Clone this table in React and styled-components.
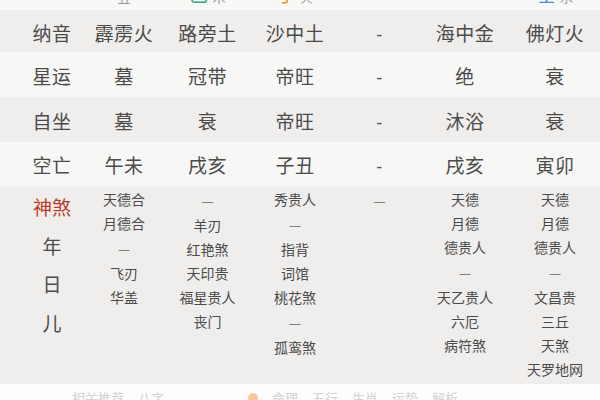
import React from 'react';
import styled, { createGlobalStyle } from 'styled-components';

const GlobalStyle = createGlobalStyle`
  html, body {
    margin: 0;
    padding: 0;
    background: #fdfdfd;
    overflow: hidden;
  }
  body {
    width: 600px;
    height: 400px;
    font-family: "Noto Sans CJK SC", "Noto Sans", sans-serif;
    color: #4b4b4b;
  }
`;

const COLS = '19px 66px 78px 89px 86px 83px 88px 92px';

const Page = styled.div`
  width: 600px;
  height: 400px;
  display: flex;
  flex-direction: column;
  overflow: hidden;
`;

const TopStrip = styled.div`
  flex-shrink: 0;
  height: 10px;
  background: #f8f8f7;
  display: grid;
  grid-template-columns: ${COLS};
`;

const TopCell = styled.div`
  grid-column: ${p => p.$col};
  height: 10px;
  overflow: hidden;
  text-align: center;
  white-space: nowrap;
`;

const TopText = styled.div`
  font-size: 19px;
  line-height: 19px;
  margin-top: -16px;
`;

const Elem = styled.span`
  color: ${p => p.$color};
  margin-right: 4px;
`;

const Tag = styled.span`
  color: #9a9a9a;
  font-size: 13px;
`;

const Row = styled.div`
  flex-shrink: 0;
  display: grid;
  grid-template-columns: ${COLS};
  height: ${p => p.$h}px;
  align-items: center;
  background: ${p => (p.$tone === 'dark' ? '#efeeec' : '#f7f7f6')};
  font-size: 19px;
  padding-top: ${p => p.$pad}px;
  box-sizing: border-box;
`;

const Cell = styled.div`
  grid-column: ${p => p.$col};
  text-align: center;
  white-space: nowrap;
  letter-spacing: 0.5px;
`;

const Hyphen = styled.span`
  font-family: "Liberation Sans", sans-serif;
  font-size: 18px;
  color: #555;
`;

const ShenshaRow = styled.div`
  flex-shrink: 0;
  display: grid;
  grid-template-columns: ${COLS};
  height: 197px;
  background: #efeeec;
  align-items: start;
`;

const LabelStack = styled.div`
  grid-column: 2;
  display: flex;
  flex-direction: column;
  align-items: center;
  padding-top: 1px;
  font-size: 19px;
  line-height: 38.5px;
`;

const Red = styled.span`
  color: #c0392b;
`;

const List = styled.div`
  grid-column: ${p => p.$col};
  display: flex;
  flex-direction: column;
  align-items: center;
  padding-top: 0;
  font-size: 14px;
  line-height: 24px;
  white-space: nowrap;
`;

const Dash = styled.span`
  font-family: "Liberation Sans", sans-serif;
  font-size: 11px;
  color: #666;
`;

const BottomStrip = styled.div`
  flex: 1;
  min-height: 0;
  overflow: hidden;
  background: #fdfdfd;
  display: flex;
  align-items: flex-start;
  padding-top: 4px;
  padding-left: 72px;
  gap: 14px;
  font-size: 13px;
  color: #d2d2d2;
  white-space: nowrap;
`;

const Dot = styled.span`
  display: inline-block;
  flex-shrink: 0;
  width: 10px;
  height: 10px;
  margin-top: 5px;
  border-radius: 50%;
  background: #f6c89a;
  margin-left: 70px;
`;

const main = [
  { label: '纳音', vals: ['霹雳火', '路旁土', '沙中土', '-', '海中金', '佛灯火'], h: 42, pad: 2, tone: 'dark' },
  { label: '星运', vals: ['墓', '冠带', '帝旺', '-', '绝', '衰'], h: 45, pad: 1, tone: 'light' },
  { label: '自坐', vals: ['墓', '衰', '帝旺', '-', '沐浴', '衰'], h: 45, pad: 1, tone: 'dark' },
  { label: '空亡', vals: ['午未', '戌亥', '子丑', '-', '戌亥', '寅卯'], h: 45, pad: 0, tone: 'light' },
];

const shensha = [
  ['天德合', '月德合', '—', '飞刃', '华盖'],
  ['—', '羊刃', '红艳煞', '天印贵', '福星贵人', '丧门'],
  ['秀贵人', '—', '指背', '词馆', '桃花煞', '—', '孤鸾煞'],
  ['—'],
  ['天德', '月德', '德贵人', '—', '天乙贵人', '六厄', '病符煞'],
  ['天德', '月德', '德贵人', '—', '文昌贵', '三丘', '天煞', '天罗地网'],
];

const renderVal = v => (v === '-' ? <Hyphen>-</Hyphen> : v);
const renderItem = v => (v === '—' ? <Dash>—</Dash> : v);

export default function App() {
  return (
    <Page>
      <GlobalStyle />
      <TopStrip>
        <TopCell $col={3}><TopText><Tag>丑</Tag></TopText></TopCell>
        <TopCell $col={4}><TopText><Elem $color="#3aa57a">乙</Elem><Tag>木</Tag></TopText></TopCell>
        <TopCell $col={5}><TopText><Elem $color="#e8962e">丁</Elem><Tag>火</Tag></TopText></TopCell>
        <TopCell $col={8}><TopText><Elem $color="#4a8fd6">壬</Elem><Tag>水</Tag></TopText></TopCell>
      </TopStrip>
      {main.map(r => (
        <Row key={r.label} $h={r.h} $pad={r.pad} $tone={r.tone}>
          <Cell $col={2}>{r.label}</Cell>
          {r.vals.map((v, i) => (
            <Cell key={i} $col={i + 3}>{renderVal(v)}</Cell>
          ))}
        </Row>
      ))}
      <ShenshaRow>
        <LabelStack>
          <Red>神煞</Red>
          <span>年</span>
          <span>日</span>
          <span>儿</span>
        </LabelStack>
        {shensha.map((list, i) => (
          <List key={i} $col={i + 3}>
            {list.map((v, j) => (
              <span key={j}>{renderItem(v)}</span>
            ))}
          </List>
        ))}
      </ShenshaRow>
      <BottomStrip>
        <span>相关推荐</span>
        <span>八字</span>
        <Dot />
        <span>命理</span>
        <span>五行</span>
        <span>生肖</span>
        <span>运势</span>
        <span>解析</span>
      </BottomStrip>
    </Page>
  );
}
